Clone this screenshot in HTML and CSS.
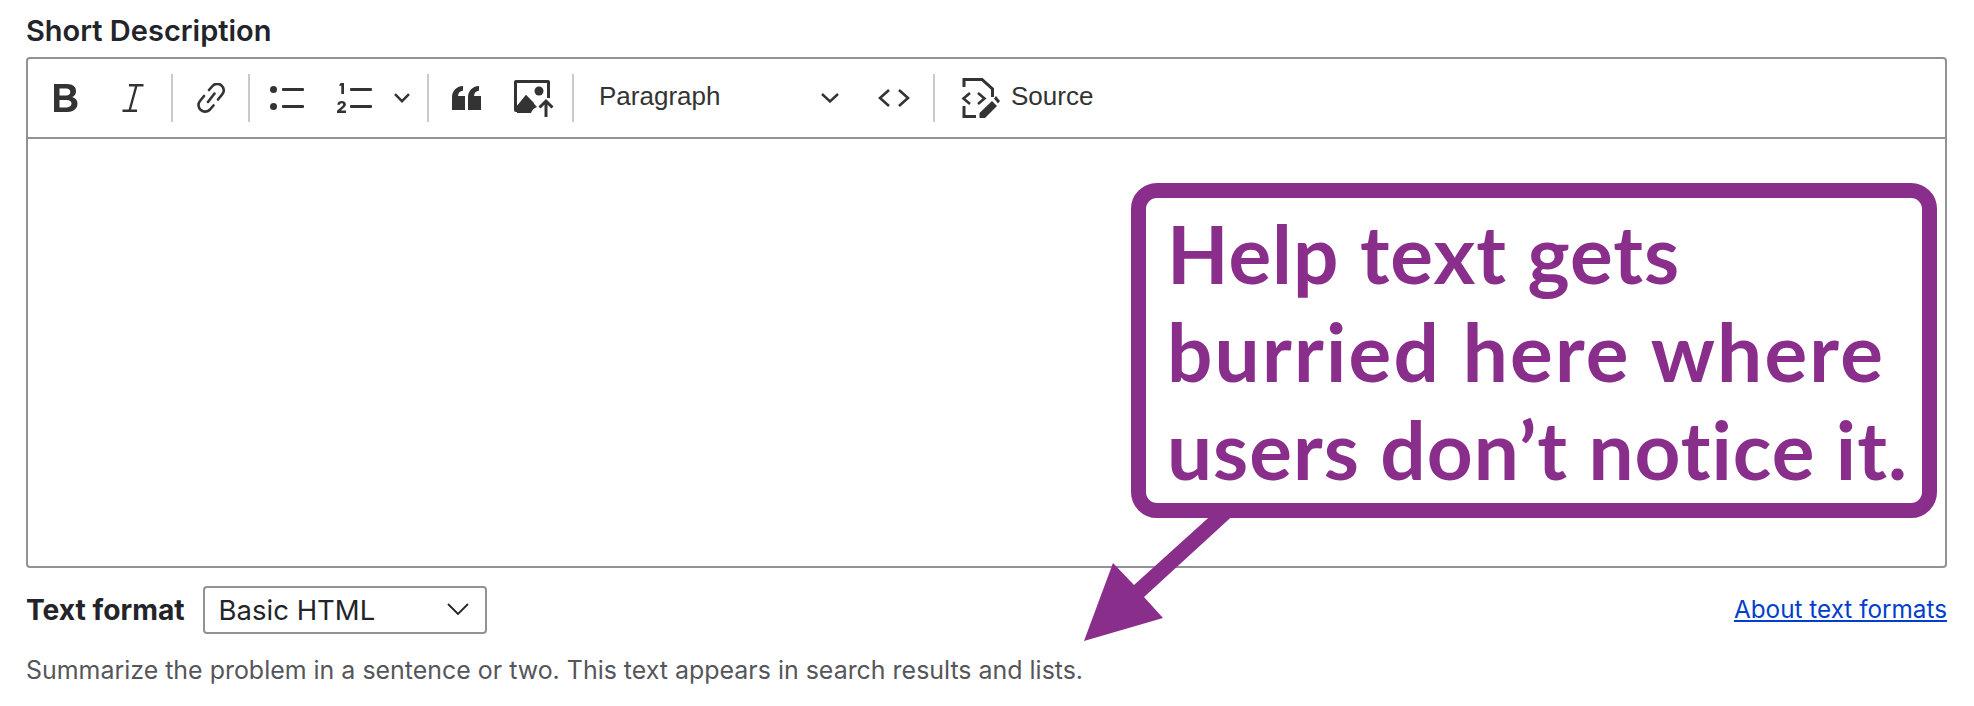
FILE: index.html
```html
<!DOCTYPE html>
<html lang="en">
<head>
<meta charset="utf-8">
<title>Short Description</title>
<link rel="stylesheet" href="styles.css">
</head>
<body>
<main class="field">
  <label class="field-label">Short Description</label>
  <div class="editor">
    <div class="toolbar">
      <svg class="icon i-bold" width="24" height="28" viewBox="0 0 24 28"><path fill="#333" fill-rule="evenodd" d="M0 0h13c6 0 9 3 9 7.200 0 2.800-1.400 4.900-3.800 5.900 3.100.9 5.300 3.200 5.300 6.500 0 5-3.800 8.400-9.600 8.400H0zM5.500 4.600v6.900h6.700c2.500 0 4.100-1.300 4.100-3.500s-1.600-3.400-4.100-3.400zm0 11.300v7.500h7.200c3 0 4.800-1.400 4.800-3.800s-1.800-3.700-4.800-3.700z"/></svg>
      <svg class="icon i-italic" width="22" height="28" viewBox="0 0 22 28"><path fill="none" stroke="#333" stroke-width="2.400" d="M7 1.200h14.500M0.500 26.800h14.500M14.500 1.200 7.500 26.800"/></svg>
      <span class="sep s-first"></span>
      <svg class="icon i-link" width="28" height="30" viewBox="0 0 28 30"><g fill="none" stroke="#333" stroke-width="2.600" stroke-linecap="round"><path d="M16.500 22.500 13 26.500c-2.400 2.600-6.500 2.800-9.200.5-2.700-2.300-3.100-6.300-.8-9L7 13"/><path d="M12 7l3.500-4c2.300-2.600 6.300-2.900 9-.6 2.700 2.400 3 6.400.7 9L21 16.500"/><path d="M11 19l6.500-8.500"/></g></svg>
      <span class="sep s-link"></span>
      <svg class="icon i-bullet" width="34" height="24" viewBox="0 0 34 24"><g fill="#333"><circle cx="3.500" cy="3.500" r="3.500"/><circle cx="3.500" cy="20.500" r="3.500"/><rect x="12" y="2" width="22" height="3" rx="1"/><rect x="12" y="19" width="22" height="3" rx="1"/></g></svg>
      <svg class="icon i-number" width="35" height="32" viewBox="0 0 35 32"><g fill="#333"><path d="M3.500 1H7v11H4.300V3.700H2z"/><path d="M0 31v-2.200l4.800-4.300c.9-.8 1.300-1.400 1.300-2 0-.8-.6-1.300-1.500-1.300-1 0-1.600.6-1.700 1.600H.3C.4 20.400 2 19 4.700 19c2.600 0 4.200 1.300 4.200 3.300 0 1.400-.7 2.400-2.300 3.700l-2.700 2.500h5.100V31z"/><rect x="13" y="6" width="22" height="3" rx="1"/><rect x="13" y="23" width="22" height="3" rx="1"/></g></svg>
      <svg class="icon i-chevron-list" width="16" height="10" viewBox="0 0 16 10"><path fill="none" stroke="#333" stroke-width="2.400" d="M1 1.200l7 7 7-7"/></svg>
      <span class="sep s-list"></span>
      <svg class="icon i-quote" width="29" height="24" viewBox="0 0 29 24"><path fill="#333" d="M0 24V11.500C0 5 4 .5 11 0v4.500c-3 .5-5 2.500-5 5.500h7v14zM16 24V11.500C16 5 20 .5 27 0v4.500c-3 .5-5 2.500-5 5.500h7v14z"/></svg>
      <svg class="icon i-image" width="40" height="37" viewBox="0 0 40 37"><path fill="#333" d="M2 0h32a2 2 0 0 1 2 2v16h-3V3H3v23l9-11 8 8c-2 2-4 5-4.500 9H2a2 2 0 0 1-2-2V2a2 2 0 0 1 2-2z"/><path fill="#333" d="M3 26l9-11 11 12c-3 1-5 3-6 6H3z"/><circle cx="25" cy="11" r="4.500" fill="#333"/><path fill="none" stroke="#333" stroke-width="3" d="M32 37V21M25.500 27.500 32 21l6.500 6.500"/></svg>
      <span class="sep s-image"></span>
      <span class="para-label">Paragraph</span>
      <svg class="icon i-chevron-para" width="18" height="10" viewBox="0 0 18 10"><path fill="none" stroke="#333" stroke-width="2.400" d="M1 1l8 7.500L17 1"/></svg>
      <svg class="icon i-code" width="32" height="18" viewBox="0 0 32 18"><path fill="none" stroke="#333" stroke-width="2.600" d="M11 1 2 9l9 8M21 1l9 8-9 8"/></svg>
      <span class="sep s-code"></span>
      <svg class="icon i-source" width="39" height="40" viewBox="0 0 39 40"><g fill="none" stroke="#333" stroke-width="3"><path d="M3 9V1.500h18L31.500 11v8"/><path d="M3 28v10.500h12"/><path d="M9 15l-6.500 5.500L9 26M17 15l6.500 5.500L17 26" stroke-width="2.600"/></g><path fill="#333" d="M31 23l5 5-12 12h-5.500V35z"/><path fill="#333" d="M33 20.500l2-2.500 4 5-2 2.500z"/></svg>
      <span class="source-label">Source</span>
    </div>
    <div class="editor-body"></div>
  </div>
  <div class="format-row">
    <span class="format-label">Text format</span>
    <div class="select">
      <span>Basic HTML</span>
      <svg width="22" height="13" viewBox="0 0 22 13"><path fill="none" stroke="#232429" stroke-width="1.800" d="M1 1l10 10L21 1"/></svg>
    </div>
    <a class="about-link" href="#">About text formats</a>
  </div>
  <p class="help">Summarize the problem in a sentence or two. This text appears in search results and lists.</p>
</main>

<svg class="arrow" width="1974" height="706" viewBox="0 0 1974 706"><polygon fill="#8a2e8c" points="1217,510 1239,510 1144,597 1163,618 1084,641 1113,563 1134,585"/></svg>
<div class="callout">Help text gets<br><span class="callout-wide">burried here where</span><br>users don’t notice it.</div>
</body>
</html>
```

FILE: styles.css
```css
* { box-sizing: border-box; }
html, body { margin: 0; padding: 0; background: #fff; }
body { width: 1974px; height: 706px; overflow: hidden; position: relative; color: #232429; font-family: Inter, "Liberation Sans", sans-serif; }

.field { padding: 15px 27px 0 26px; }
.field-label { display: block; font-size: 29px; line-height: 32px; font-weight: 600; margin-bottom: 10px; }

.editor { height: 511px; border: 2px solid #919297; border-radius: 4px; display: flex; flex-direction: column; }
.toolbar { height: 80px; flex: none; border-bottom: 2px solid #919297; display: flex; align-items: center; font-family: "Liberation Sans", sans-serif; font-size: 26px; color: #333; }
.editor-body { flex: 1; }

.icon { flex: none; display: block; }
.sep { flex: none; width: 2px; height: 48px; background: #c9c9d0; }

.i-bold { margin-left: 26px; }
.i-italic { margin-left: 44px; }
.s-first { margin-left: 27px; }
.i-link { margin-left: 24px; }
.s-link { margin-left: 23px; }
.i-bullet { margin-left: 20px; }
.i-number { margin-left: 33px; }
.i-chevron-list { margin-left: 22px; }
.s-list { margin-left: 17px; }
.i-quote { margin-left: 23px; }
.i-image { margin-left: 33px; }
.s-image { margin-left: 18px; }
.para-label { margin: 0 0 4px 25px; width: 222px; flex: none; }
.i-code { margin-left: 39px; }
.s-code { margin-left: 23px; }
.i-source { margin-left: 26px; }
.source-label { margin: 0 0 4px 11px; }

.format-row { display: flex; align-items: center; margin-top: 18px; height: 48px; }
.format-label { font-size: 28.200px; font-weight: 700; margin-right: 18px; }
.select { width: 284px; height: 48px; border: 2px solid #919297; border-radius: 4px; display: flex; align-items: center; justify-content: space-between; padding: 0 16px 0 14px; font-size: 27.500px; }
.select svg { margin-bottom: 1px; }
.about-link { margin: 0 0 2px auto; font-size: 24.300px; color: #003ecc; }
.help { margin: 22px 0 0; font-size: 24.950px; line-height: 28px; color: #55565b; }

.arrow { position: absolute; left: 0; top: 0; }
.callout { position: absolute; left: 1131px; top: 183px; width: 806px; height: 335px; border: 15px solid #8a2e8c; border-radius: 26px; background: #fff; padding: 6px 0 0 21px; font-family: Lato, sans-serif; font-weight: 700; font-size: 80px; letter-spacing: 1px; line-height: 98px; color: #8a2e8c; white-space: nowrap; }
.callout-wide { letter-spacing: 2.200px; }
```
